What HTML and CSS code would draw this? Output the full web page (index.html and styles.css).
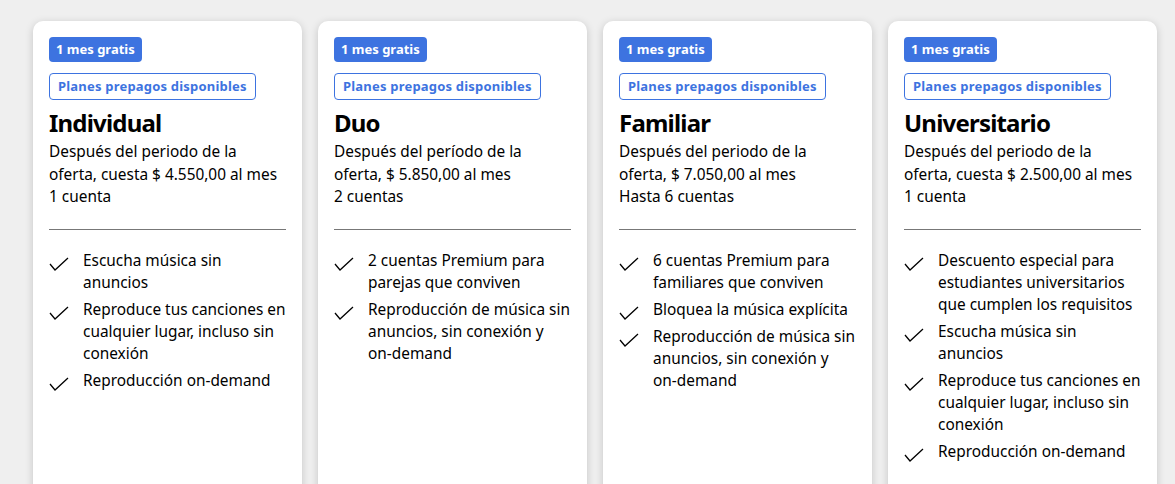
FILE: index.html
```html
<!DOCTYPE html>
<html lang="es">
<head>
<meta charset="utf-8">
<title>Planes</title>
<link rel="stylesheet" href="styles.css">
</head>
<body>
<div class="plans">
  <div class="card">
    <span class="badge">1 mes gratis</span>
    <span class="tag">Planes prepagos disponibles</span>
    <h2 class="title">Individual</h2>
    <p class="desc">Después del periodo de la oferta, cuesta $&nbsp;4.550,00 al mes</p>
    <p class="desc">1 cuenta</p>
    <hr class="rule">
    <ul class="features">
      <li><svg class="check" viewBox="0 0 20 14"><polyline points="1,7 6,13 19,1"/></svg><span>Escucha música sin anuncios</span></li>
      <li><svg class="check" viewBox="0 0 20 14"><polyline points="1,7 6,13 19,1"/></svg><span>Reproduce tus canciones en cualquier lugar, incluso sin conexión</span></li>
      <li><svg class="check" viewBox="0 0 20 14"><polyline points="1,7 6,13 19,1"/></svg><span>Reproducción <span class="nw">on-demand</span></span></li>
    </ul>
  </div>
  <div class="card">
    <span class="badge">1 mes gratis</span>
    <span class="tag">Planes prepagos disponibles</span>
    <h2 class="title">Duo</h2>
    <p class="desc">Después del período de la oferta, $&nbsp;5.850,00 al mes</p>
    <p class="desc">2 cuentas</p>
    <hr class="rule">
    <ul class="features">
      <li><svg class="check" viewBox="0 0 20 14"><polyline points="1,7 6,13 19,1"/></svg><span>2 cuentas Premium para parejas que conviven</span></li>
      <li><svg class="check" viewBox="0 0 20 14"><polyline points="1,7 6,13 19,1"/></svg><span>Reproducción de música sin anuncios, sin conexión y <span class="nw">on-demand</span></span></li>
    </ul>
  </div>
  <div class="card">
    <span class="badge">1 mes gratis</span>
    <span class="tag">Planes prepagos disponibles</span>
    <h2 class="title">Familiar</h2>
    <p class="desc">Después del periodo de la oferta, $&nbsp;7.050,00 al mes</p>
    <p class="desc">Hasta 6 cuentas</p>
    <hr class="rule">
    <ul class="features">
      <li><svg class="check" viewBox="0 0 20 14"><polyline points="1,7 6,13 19,1"/></svg><span>6 cuentas Premium para familiares que conviven</span></li>
      <li><svg class="check" viewBox="0 0 20 14"><polyline points="1,7 6,13 19,1"/></svg><span>Bloquea la música explícita</span></li>
      <li><svg class="check" viewBox="0 0 20 14"><polyline points="1,7 6,13 19,1"/></svg><span>Reproducción de música sin anuncios, sin conexión y <span class="nw">on-demand</span></span></li>
    </ul>
  </div>
  <div class="card">
    <span class="badge">1 mes gratis</span>
    <span class="tag">Planes prepagos disponibles</span>
    <h2 class="title">Universitario</h2>
    <p class="desc">Después del periodo de la oferta, cuesta $&nbsp;2.500,00 al mes</p>
    <p class="desc">1 cuenta</p>
    <hr class="rule">
    <ul class="features">
      <li><svg class="check" viewBox="0 0 20 14"><polyline points="1,7 6,13 19,1"/></svg><span>Descuento especial para estudiantes universitarios que cumplen los requisitos</span></li>
      <li><svg class="check" viewBox="0 0 20 14"><polyline points="1,7 6,13 19,1"/></svg><span>Escucha música sin anuncios</span></li>
      <li><svg class="check" viewBox="0 0 20 14"><polyline points="1,7 6,13 19,1"/></svg><span>Reproduce tus canciones en cualquier lugar, incluso sin conexión</span></li>
      <li><svg class="check" viewBox="0 0 20 14"><polyline points="1,7 6,13 19,1"/></svg><span>Reproducción <span class="nw">on-demand</span></span></li>
    </ul>
  </div>
</div>
</body>
</html>
```
FILE: styles.css
```css
* { box-sizing: border-box; }
html, body { margin: 0; padding: 0; }
body {
  background: #efefef;
  font-family: "Noto Sans", "Liberation Sans", sans-serif;
  color: #000;
  overflow: hidden;
  height: 484px;
}
.plans {
  display: flex;
  gap: 16px;
  padding: 21px 0 0 33px;
}
.card {
  width: 269px;
  min-height: 520px;
  background: #fff;
  border-radius: 10px;
  box-shadow: 0 2px 8px rgba(0,0,0,0.18);
  padding: 16px 16px;
  display: flex;
  flex-direction: column;
  align-items: flex-start;
}
.badge {
  display: inline-block;
  background: #3d73e0;
  color: #fff;
  font-weight: 700;
  font-size: 13px;
  line-height: 25px;
  height: 25px;
  padding: 0 7px;
  border-radius: 4px;
  margin-bottom: 11px;
}
.tag {
  display: inline-block;
  border: 1px solid #3d73e0;
  color: #3d73e0;
  font-weight: 700;
  font-size: 13px;
  letter-spacing: 0.2px;
  line-height: 25px;
  height: 27px;
  padding: 0 8px;
  border-radius: 4px;
  margin-bottom: 9px;
}
.title {
  margin: 0 0 4px;
  font-size: 24px;
  font-weight: 700;
  letter-spacing: -0.8px;
  line-height: 28px;
}
.desc {
  margin: 0;
  font-size: 15.4px;
  line-height: 22.5px;
}
.rule {
  align-self: stretch;
  border: 0;
  border-top: 1px solid #777;
  margin: 20px 0 0;
}
.features {
  list-style: none;
  margin: 20px 0 0;
  padding: 0;
  display: flex;
  flex-direction: column;
  gap: 5px;
}
.features li {
  display: flex;
  gap: 14px;
  font-size: 15.4px;
  line-height: 22px;
}
.nw { white-space: nowrap; }
.check {
  flex: none;
  width: 20px;
  height: 14px;
  margin-top: 7px;
  fill: none;
  stroke: #000;
  stroke-width: 1.3;
}
```
